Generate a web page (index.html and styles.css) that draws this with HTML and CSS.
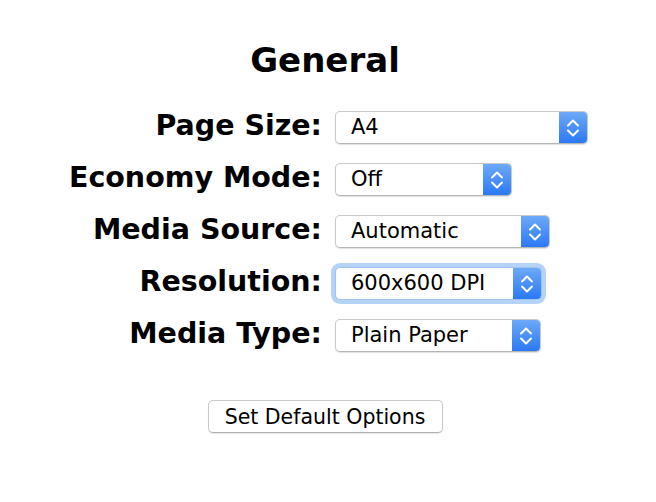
FILE: index.html
```html
<!DOCTYPE html>
<html>
<head>
<meta charset="utf-8">
<link rel="stylesheet" href="styles.css">
</head>
<body>
<div class="page">
  <h1 class="title">General</h1>
  <div class="form">
    <div class="label">Page Size:</div>
    <div class="field"><div class="select w-page"><span class="value">A4</span><span class="arrows"><svg width="16" height="22" viewBox="0 0 16 22"><path d="M3 8.5 L8 3.5 L13 8.5 M3 13.5 L8 18.5 L13 13.5" fill="none" stroke="#fff" stroke-width="2" stroke-linecap="round" stroke-linejoin="round"/></svg></span></div></div>

    <div class="label">Economy Mode:</div>
    <div class="field"><div class="select w-eco"><span class="value">Off</span><span class="arrows"><svg width="16" height="22" viewBox="0 0 16 22"><path d="M3 8.5 L8 3.5 L13 8.5 M3 13.5 L8 18.5 L13 13.5" fill="none" stroke="#fff" stroke-width="2" stroke-linecap="round" stroke-linejoin="round"/></svg></span></div></div>

    <div class="label">Media Source:</div>
    <div class="field"><div class="select w-src"><span class="value">Automatic</span><span class="arrows"><svg width="16" height="22" viewBox="0 0 16 22"><path d="M3 8.5 L8 3.5 L13 8.5 M3 13.5 L8 18.5 L13 13.5" fill="none" stroke="#fff" stroke-width="2" stroke-linecap="round" stroke-linejoin="round"/></svg></span></div></div>

    <div class="label">Resolution:</div>
    <div class="field"><div class="select w-res focused"><span class="value">600x600 DPI</span><span class="arrows"><svg width="16" height="22" viewBox="0 0 16 22"><path d="M3 8.5 L8 3.5 L13 8.5 M3 13.5 L8 18.5 L13 13.5" fill="none" stroke="#fff" stroke-width="2" stroke-linecap="round" stroke-linejoin="round"/></svg></span></div></div>

    <div class="label">Media Type:</div>
    <div class="field"><div class="select w-type"><span class="value">Plain Paper</span><span class="arrows"><svg width="16" height="22" viewBox="0 0 16 22"><path d="M3 8.5 L8 3.5 L13 8.5 M3 13.5 L8 18.5 L13 13.5" fill="none" stroke="#fff" stroke-width="2" stroke-linecap="round" stroke-linejoin="round"/></svg></span></div></div>
  </div>
  <button class="btn">Set Default Options</button>
</div>
</body>
</html>
```
FILE: styles.css
```css
html, body {
  margin: 0;
  padding: 0;
  background: #ffffff;
}
body {
  width: 656px;
  height: 502px;
  overflow: hidden;
  font-family: "DejaVu Sans", "Liberation Sans", sans-serif;
  color: #000;
}
.page {
  width: 650px;
  display: flex;
  flex-direction: column;
  align-items: center;
  padding-top: 40px;
}
.title {
  margin: 0;
  font-size: 34px;
  line-height: 40px;
  font-weight: bold;
}
.form {
  align-self: flex-start;
  margin-top: 31px;
  display: grid;
  grid-template-columns: 322px auto;
  grid-auto-rows: 33px;
  column-gap: 13px;
  row-gap: 19px;
  align-items: center;
}
.label {
  text-align: right;
  font-weight: bold;
  font-size: 28.5px;
  line-height: 29px;
  padding-bottom: 4px;
}
.field {
  display: flex;
}
.select {
  box-sizing: border-box;
  height: 33px;
  display: flex;
  align-items: stretch;
  border: 1px solid #c9c9c9;
  border-bottom-color: #b5b5b5;
  border-radius: 5px;
  background: #fff;
  box-shadow: 0 1px 1px rgba(0,0,0,0.12);
  overflow: hidden;
}
.select.focused {
  box-shadow: 0 0 0 4px #b5d3f7;
  border-color: #9fc2ef;
}
.value {
  flex: 1;
  display: flex;
  align-items: center;
  padding-left: 15px;
  font-size: 21px;
  line-height: 1;
}
.arrows {
  width: 28px;
  display: flex;
  align-items: center;
  justify-content: center;
  background: linear-gradient(#6ca9f8, #2b79f5);
}
.w-page { width: 253px; }
.w-eco { width: 177px; }
.w-src { width: 215px; }
.w-res { width: 207px; }
.w-type { width: 206px; }
.btn {
  margin-top: 48px;
  box-sizing: border-box;
  width: 235px;
  height: 33px;
  font-family: "DejaVu Sans", "Liberation Sans", sans-serif;
  font-size: 20.5px;
  color: #000;
  background: #fff;
  border: 1px solid #c9c9c9;
  border-bottom-color: #b0b0b0;
  border-radius: 5px;
  box-shadow: 0 1px 1px rgba(0,0,0,0.1);
  padding: 0;
}
```
